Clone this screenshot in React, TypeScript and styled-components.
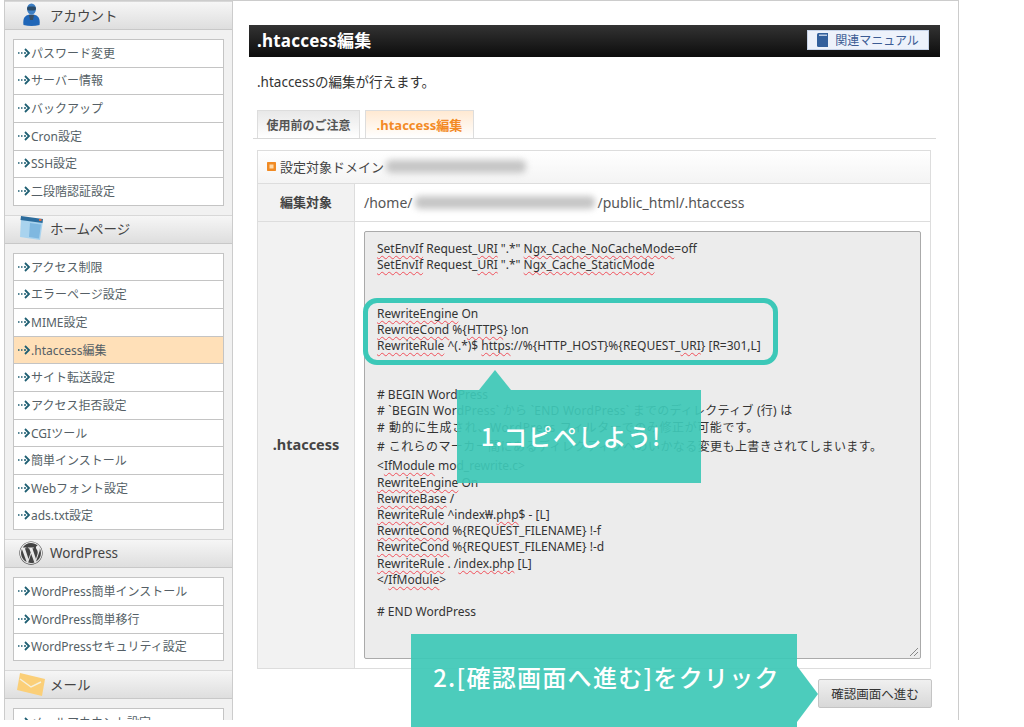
import React from 'react';
import styled, {createGlobalStyle} from 'styled-components';
import {FaWordpress} from 'react-icons/fa';

const GlobalStyle = createGlobalStyle`
  html, body {
    margin: 0;
    padding: 0;
    background: #fff;
  }
  body {
    font-family: "Noto Sans", "Noto Sans CJK JP", sans-serif;
    color: #444;
  }
`;

const sections = [
    {
        title: 'アカウント',
        icon: 'user',
        items: ['パスワード変更', 'サーバー情報', 'バックアップ', 'Cron設定', 'SSH設定', '二段階認証設定'],
    },
    {
        title: 'ホームページ',
        icon: 'window',
        items: ['アクセス制限', 'エラーページ設定', 'MIME設定', '.htaccess編集', 'サイト転送設定', 'アクセス拒否設定', 'CGIツール', '簡単インストール', 'Webフォント設定', 'ads.txt設定'],
    },
    {
        title: 'WordPress',
        icon: 'wp',
        items: ['WordPress簡単インストール', 'WordPress簡単移行', 'WordPressセキュリティ設定'],
    },
    {
        title: 'メール',
        icon: 'mail',
        items: ['メールアカウント設定'],
    },
];

const UserIcon = () => (
    <svg width="17" height="23" viewBox="0 0 17 23">
        <ellipse cx="8.500" cy="6" rx="4.500" ry="5.500" fill="#3d7fc4"/>
        <rect x="4" y="3.500" width="9" height="4" rx="2" fill="#2b4a66"/>
        <path d="M.5 22C-.5 15 2 11.500 8.500 11.500S17.500 15 16.500 22Q8.500 24 .5 22z" fill="#1f66b8"/>
        <path d="M6 12h5l-1 5H7z" fill="#3a4f63"/>
    </svg>
);

const WindowIcon = () => (
    <svg width="26" height="26" viewBox="0 0 26 26">
        <path d="M3 3l22 3-3 19-20-3z" fill="#a9d3ee"/>
        <path d="M3 1l22 3-.5 4L2.500 5z" fill="#2c6c9c"/>
        <path d="M12 8l11 1.500-2 14-10-1.500z" fill="#7fb8e0"/>
        <rect x="21" y="4" width="2.500" height="2" fill="#e2683c"/>
    </svg>
);

const MailIcon = () => (
    <svg width="28" height="24" viewBox="0 0 28 24">
        <path d="M3 1l25 6-3 17L0 18z" fill="#fbcf78"/>
        <path d="M3 7l11 8 10-5" fill="none" stroke="#f5f0dc" strokeWidth="1.500"/>
    </svg>
);

const Arrow = () => (
    <svg width="14" height="10" viewBox="0 0 14 10">
        <path d="M8 1l4 4-4 4" fill="none" stroke="#1f5f73" strokeWidth="1.800"/>
        <path d="M1 5h1.500M4 5h1.500M7 5h2" stroke="#1f5f73" strokeWidth="1.500"/>
    </svg>
);

const BookIcon = () => (
    <svg width="11" height="14" viewBox="0 0 11 14">
        <path d="M0 1.500Q0 0 1.500 0H11v14H1.500Q0 14 0 12.500z" fill="#33609c"/>
        <rect x="2" y="1.500" width="8" height="1.500" fill="#b9cbe4"/>
    </svg>
);

const sectionIcon = (name: string) => {
    if (name === 'user') return <UserIcon/>;
    if (name === 'window') return <WindowIcon/>;
    if (name === 'wp') return <FaWordpress size={24} color="#444"/>;
    return <MailIcon/>;
};

const Word = styled.span`
  text-decoration: underline wavy #f0505a 1px;
  text-underline-offset: 2px;
  text-decoration-skip-ink: none;
`;

const code = [
    [<Word>SetEnvIf</Word>, ' Request_', <Word>URI</Word>, ' ".*" ', <Word>Ngx_Cache_NoCacheMode</Word>, '=off'],
    [<Word>SetEnvIf</Word>, ' Request_', <Word>URI</Word>, ' ".*" ', <Word>Ngx_Cache_StaticMode</Word>],
    [],
    [],
    [<Word>RewriteEngine</Word>, ' On'],
    [<Word>RewriteCond</Word>, ' %{', <Word>HTTPS</Word>, '} !on'],
    [<Word>RewriteRule</Word>, ' ^(.*)$ ', <Word>https</Word>, '://%{HTTP_HOST}%{REQUEST_', <Word>URI</Word>, '} [R=301,L]'],
    [],
    [],
    ['# BEGIN WordPress'],
    ['# `BEGIN WordPress` から `END WordPress` までのディレクティブ (行) は'],
    ['# 動的に生成され、WordPress フィルターでのみ修正が可能です。'],
    ['# これらのマーカー間にあるディレクティブへのいかなる変更も上書きされてしまいます。'],
    ['<', <Word>IfModule</Word>, ' mod_rewrite.c>'],
    [<Word>RewriteEngine</Word>, ' On'],
    [<Word>RewriteBase</Word>, ' /'],
    [<Word>RewriteRule</Word>, ' ^index₩.', <Word>php</Word>, '$ - [L]'],
    [<Word>RewriteCond</Word>, ' %{REQUEST_FILENAME} !-f'],
    [<Word>RewriteCond</Word>, ' %{REQUEST_FILENAME} !-d'],
    [<Word>RewriteRule</Word>, ' . /', <Word>index.php</Word>, ' [L]'],
    ['</', <Word>IfModule</Word>, '>'],
    [],
    ['# END WordPress'],
];

// the japanese comment lines sit taller and wider in the textarea
const lineSpacing: Record<number, number> = {10: 0.25, 11: 0.6, 12: 0.42};
const lineHeights: Record<number, number> = {11: 18, 12: 19.5, 13: 18};

export default function App() {
    return (
        <Page>
            <GlobalStyle/>
            <Sidebar>
                {sections.map(section => (
                    <Section key={section.title}>
                        <SectionHead>
                            <SectionIcon>{sectionIcon(section.icon)}</SectionIcon>
                            {section.title}
                        </SectionHead>
                        <Menu>
                            {section.items.map(item => (
                                <MenuItem key={item} $active={item === '.htaccess編集'}>
                                    <Arrow/>{item}
                                </MenuItem>
                            ))}
                        </Menu>
                    </Section>
                ))}
            </Sidebar>
            <Main>
                <TitleBar>
                    <Title>.htaccess編集</Title>
                    <ManualButton><BookIcon/>関連マニュアル</ManualButton>
                </TitleBar>
                <Lead>.htaccessの編集が行えます。</Lead>
                <Tabs>
                    <Tab>使用前のご注意</Tab>
                    <Tab $active>.htaccess編集</Tab>
                </Tabs>
                <Panel>
                    <DomainHead>
                        <DomainMark/>
                        設定対象ドメイン
                        <Blurred $width={140}/>
                    </DomainHead>
                    <Row>
                        <RowLabel>編集対象</RowLabel>
                        <RowValue>/home/<Blurred $width={180}/>/public_html/.htaccess</RowValue>
                    </Row>
                    <Row $grow>
                        <RowLabel $latin>.htaccess</RowLabel>
                        <RowValue>
                            <Editor>
                                {code.map((line, i) => (
                                    <CodeLine key={i} $height={lineHeights[i] ?? 16.2} $spacing={lineSpacing[i] ?? 0}>
                                        {line.map((part, j) => <React.Fragment key={j}>{part}</React.Fragment>)}
                                    </CodeLine>
                                ))}
                                <Grip width="10" height="10" viewBox="0 0 10 10">
                                    <path d="M9 1L1 9M9 5L5 9" stroke="#888" fill="none"/>
                                </Grip>
                            </Editor>
                        </RowValue>
                    </Row>
                </Panel>
                <Actions>
                    <SubmitButton>確認画面へ進む</SubmitButton>
                </Actions>
            </Main>
            <CopyFrame/>
            <CopyCallout>1.コピペしよう!</CopyCallout>
            <ClickCallout>2.[確認画面へ進む]をクリック</ClickCallout>
        </Page>
    );
}

const Page = styled.div`
  position: relative;
  width: 1024px;
  height: 727px;
  overflow: hidden;
  display: flex;
  align-items: flex-start;
  padding-left: 4px;
  box-sizing: border-box;
`;

const Sidebar = styled.aside`
  width: 229px;
  height: 720px;
  box-sizing: border-box;
  overflow: hidden;
  flex-shrink: 0;
  background: #f1f1f1;
  border-left: 1px solid #ccc;
  border-right: 1px solid #ccc;
  border-top: 1px solid #ccc;
`;

const Section = styled.section`
  margin-bottom: 9px;
`;

const SectionHead = styled.div`
  height: 29px;
  display: flex;
  align-items: center;
  box-sizing: border-box;
  padding-bottom: 2px;
  background: linear-gradient(#f6f6f6, #dedede);
  border-bottom: 1px solid #c8c8c8;
  border-top: 1px solid #d8d8d8;
  font-size: 13.500px;
  color: #444;
`;

const SectionIcon = styled.span`
  width: 45px;
  padding-left: 7px;
  box-sizing: border-box;
  display: flex;
  justify-content: center;
`;

const Menu = styled.ul`
  list-style: none;
  margin: 9px 8px 0;
  padding: 0;
  border: 1px solid #c4c4c4;
  border-bottom: 0;
`;

const MenuItem = styled.li<{$active?: boolean}>`
  height: 27.650px;
  box-sizing: border-box;
  display: flex;
  align-items: center;
  padding: 0 0 1px 3px;
  border-bottom: 1px solid #c4c4c4;
  background: ${p => (p.$active ? '#ffe0b8' : '#fff')};
  font-size: 12px;
  color: #555f66;
`;

const Main = styled.main`
  width: 726px;
  height: 720px;
  box-sizing: border-box;
  border-top: 1px solid #ccc;
  border-right: 1px solid #ccc;
  padding: 24px 18px 0 16px;
  flex-shrink: 0;
`;

const TitleBar = styled.header`
  height: 32px;
  box-sizing: border-box;
  display: flex;
  align-items: center;
  justify-content: space-between;
  padding: 0 11px 0 8px;
  background: linear-gradient(#333, #0c0c0c);
`;

const Title = styled.h1`
  margin: 0 0 4px;
  font-size: 17px;
  font-weight: 700;
  letter-spacing: 0.2px;
  color: #fff;
`;

const ManualButton = styled.a`
  width: 122px;
  height: 20px;
  margin-bottom: 2px;
  box-sizing: border-box;
  display: flex;
  align-items: center;
  justify-content: center;
  gap: 7px;
  background: #edf2fb;
  border: 1px solid #c6d3e8;
  font-size: 12px;
  color: #3c5c94;
`;

const Lead = styled.p`
  margin: 14px 0 0;
  height: 22px;
  line-height: 22px;
  font-size: 13.500px;
  color: #333;
  padding-left: 8px;
`;

const Tabs = styled.nav`
  display: flex;
  gap: 5px;
  margin: 17px 4px 0;
  padding-left: 4px;
  height: 29px;
  box-sizing: border-box;
  border-bottom: 1px solid #d8d8d8;
`;

const Tab = styled.a<{$active?: boolean}>`
  width: ${p => (p.$active ? '109px' : '103px')};
  height: 28px;
  box-sizing: border-box;
  display: flex;
  align-items: center;
  justify-content: center;
  border: 1px solid #ddd;
  border-bottom: 0;
  background: ${p => (p.$active ? 'linear-gradient(#ffe9d2, #fff)' : 'linear-gradient(#e8e8e8, #fff)')};
  font-size: ${p => (p.$active ? '13px' : '12px')};
  font-weight: 700;
  color: ${p => (p.$active ? '#f38a25' : '#555')};
`;

const Panel = styled.section`
  width: 674px;
  height: 519px;
  margin: 11px 0 0 8px;
  box-sizing: border-box;
  display: flex;
  flex-direction: column;
  border: 1px solid #ddd;
`;

const DomainHead = styled.div`
  height: 32px;
  flex-shrink: 0;
  box-sizing: border-box;
  display: flex;
  align-items: center;
  padding: 0 0 1px 9px;
  background: linear-gradient(#fff, #f4f4f4);
  font-size: 13px;
  color: #444;
`;

const DomainMark = styled.span`
  width: 9px;
  height: 9px;
  margin-right: 4px;
  border-radius: 1px;
  background: #f08a24;
  box-shadow: inset 0 0 0 2.500px #f08a24, inset 0 0 0 6px #ffd9a8;
`;

const Blurred = styled.span<{$width: number}>`
  display: inline-block;
  width: ${p => p.$width}px;
  height: 13px;
  margin: 0 3px 0 2px;
  background: #c6c6c6;
  border-radius: 5px;
  filter: blur(3px);
`;

const Row = styled.div<{$grow?: boolean}>`
  display: flex;
  flex: ${p => (p.$grow ? '1' : '0 0 37px')};
  border-top: 1px solid #ddd;
  min-height: 0;
`;

const RowLabel = styled.div<{$latin?: boolean}>`
  width: 97px;
  flex-shrink: 0;
  display: flex;
  align-items: center;
  justify-content: center;
  padding-bottom: 2px;
  box-sizing: border-box;
  background: #f2f2f2;
  border-right: 1px solid #ddd;
  font-size: ${p => (p.$latin ? '14.500px' : '13px')};
  font-weight: 700;
  color: #444;
`;

const RowValue = styled.div`
  flex: 1;
  min-width: 0;
  display: flex;
  align-items: center;
  padding: 0 9px 1px;
  font-size: 14px;
  color: #555;
`;

const Editor = styled.div`
  position: relative;
  width: 100%;
  height: 428px;
  box-sizing: border-box;
  padding: 9.500px 12px;
  background: #ececec;
  border: 1px solid #aaa;
  border-radius: 2px;
  overflow: hidden;
  font-size: 12px;
  color: #333;
`;

const CodeLine = styled.div<{$height: number; $spacing: number}>`
  min-height: ${p => p.$height}px;
  line-height: ${p => p.$height}px;
  white-space: pre;
  letter-spacing: ${p => p.$spacing}px;
`;

const Grip = styled.svg`
  position: absolute;
  right: 1px;
  bottom: 1px;
`;

const Actions = styled.div`
  display: flex;
  justify-content: flex-end;
  margin-top: 10px;
  padding-right: 8px;
`;

const SubmitButton = styled.button`
  width: 114px;
  height: 29px;
  background: linear-gradient(#f0f0f0, #d8d8d8);
  border: 1px solid #c4c4c4;
  border-radius: 2px;
  font-family: inherit;
  font-size: 12.500px;
  color: #333;
`;

const CopyFrame = styled.div`
  position: absolute;
  left: 363px;
  top: 298px;
  width: 415px;
  height: 67px;
  box-sizing: border-box;
  border: 5.500px solid #3cc8b8;
  border-radius: 14px;
`;

const Callout = styled.div`
  position: absolute;
  box-sizing: border-box;
  display: flex;
  align-items: center;
  justify-content: center;
  background: rgba(62, 200, 183, 0.93);
  color: #fff;
  font-family: "Noto Sans CJK JP", sans-serif;
  font-weight: 500;
  font-size: 24px;
  letter-spacing: 1.300px;
`;

const CopyCallout = styled(Callout)`
  left: 457px;
  top: 390px;
  width: 244px;
  height: 93px;
  padding: 0 16px 3px 0;
  letter-spacing: 0.800px;

  &::before {
    content: '';
    position: absolute;
    left: 22px;
    top: -20px;
    border-left: 16px solid transparent;
    border-right: 16px solid transparent;
    border-bottom: 20px solid rgba(62, 200, 183, 0.93);
  }
`;

const ClickCallout = styled(Callout)`
  left: 411px;
  top: 634px;
  width: 386px;
  height: 93px;
  padding: 0 0 8px 5px;

  &::after {
    content: '';
    position: absolute;
    left: 100%;
    top: 32px;
    border-top: 28px solid transparent;
    border-bottom: 28px solid transparent;
    border-left: 21px solid rgba(62, 200, 183, 0.93);
  }
`;
